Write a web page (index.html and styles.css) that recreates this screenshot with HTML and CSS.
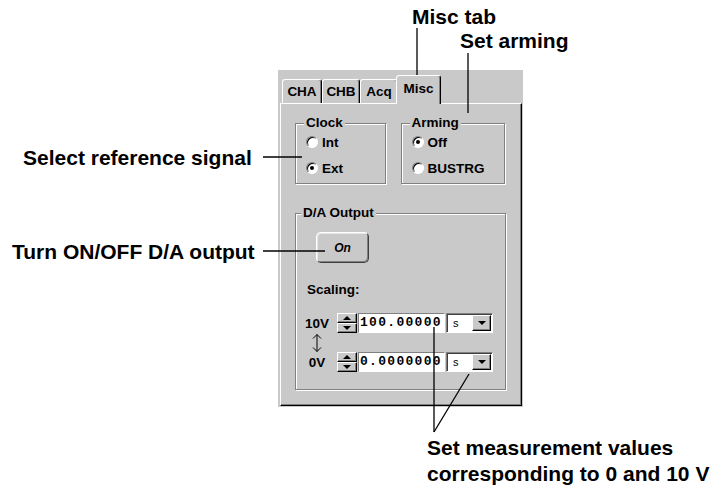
FILE: index.html
```html
<!DOCTYPE html>
<html>
<head>
<meta charset="utf-8">
<title>Misc tab</title>
<link rel="stylesheet" href="styles.css">
</head>
<body>
<div class="sheet">

<!-- the dialog -->
<div class="window">
  <div class="tabs">
    <div class="tab">CHA</div>
    <div class="tab">CHB</div>
    <div class="tab">Acq</div>
    <div class="tab sel">Misc</div>
  </div>
  <div class="pane">
    <div class="toprow">
      <div class="group clock">
        <div class="gtitle">Clock</div>
        <div class="radio"><span class="dot"></span>Int</div>
        <div class="radio"><span class="dot on"></span>Ext</div>
      </div>
      <div class="group arming">
        <div class="gtitle">Arming</div>
        <div class="radio"><span class="dot on"></span>Off</div>
        <div class="radio"><span class="dot"></span>BUSTRG</div>
      </div>
    </div>
    <div class="group da">
      <div class="gtitle">D/A Output</div>
      <div class="onbtn">On</div>
      <div class="scaling">Scaling:</div>
      <div class="srow">
        <span class="vlab">10V</span>
        <span class="spin"><span class="up"></span><span class="down"></span></span>
        <span class="field">100.00000</span>
        <span class="combo"><span class="unit">s</span><span class="drop"></span></span>
      </div>
      <div class="srow mid">
        <svg class="updown" width="14" height="20" viewBox="0 0 14 20">
          <path d="M7 1.5V18.5M3 5.5L7 1.5L11 5.5M3 14.5L7 18.5L11 14.5" fill="none" stroke="#000" stroke-width="1"/>
        </svg>
      </div>
      <div class="srow">
        <span class="vlab">0V</span>
        <span class="spin"><span class="up"></span><span class="down"></span></span>
        <span class="field">0.0000000</span>
        <span class="combo"><span class="unit">s</span><span class="drop"></span></span>
      </div>
    </div>
  </div>
</div>

<!-- callouts -->
<div class="note n-misc">Misc tab</div>
<div class="note n-arm">Set arming</div>
<div class="note n-ref">Select reference signal</div>
<div class="note n-da">Turn ON/OFF D/A output</div>
<div class="note n-meas">Set measurement values<br>corresponding to 0 and 10 V</div>

<svg class="leaders" width="713" height="485" viewBox="0 0 713 485">
  <g stroke="#000" stroke-width="1.3" fill="none">
    <path d="M417 28V81"/>
    <path d="M468 53V113"/>
    <path d="M263 157H302"/>
    <path d="M263 251H325"/>
    <path d="M434 327V432"/>
    <path d="M469 374L434 432"/>
  </g>
</svg>

</div>
</body>
</html>
```

FILE: styles.css
```css
body {
	margin		: 0;
	background-color: white;
	font-family	: "Liberation Sans", Arial, sans-serif;
}
.sheet {
	position	: relative;
	width		: 713px;
	height		: 485px;
	overflow	: hidden;
}

/* callout labels */
.note {
	position	: absolute;
	font-size	: 21px;
	font-weight	: bold;
	line-height	: 24px;
	white-space	: nowrap;
	color		: #000;
}
.n-misc { left: 412px; top: 5px; }
.n-arm  { left: 460px; top: 29px; }
.n-ref  { left: 23px;  top: 146px; }
.n-da   { left: 12px;  top: 240px; }
.n-meas { left: 427px; top: 435px; line-height: 26px; }
.leaders {
	position	: absolute;
	left		: 0;
	top		: 0;
}

/* dialog */
.window {
	position	: absolute;
	left		: 278px;
	top		: 70px;
	width		: 245px;
	height		: 337px;
	box-sizing	: border-box;
	padding		: 5px 1px 1px 2px;
	background	: #c9c9c9;
	display		: flex;
	flex-direction	: column;
	font-size	: 13.5px;
	font-weight	: bold;
	color		: #000;
}
.tabs {
	display		: flex;
	align-items	: flex-end;
	height		: 28px;
	padding-left	: 2px;
}
.tab {
	box-sizing	: border-box;
	width		: 38px;
	height		: 24px;
	padding-top	: 4px;
	text-align	: center;
	border-top	: 1px solid #fff;
	border-left	: 1px solid #fff;
	border-right	: 1px solid #000;
	border-radius	: 3px 3px 0 0;
	box-shadow	: inset -1px 0 #808080;
}
.tab:first-child { width: 40px; }
.tab.sel {
	width		: 45px;
	height		: 29px;
	margin		: 0 -2px -1px -2px;
	padding-top	: 5px;
	background	: #c9c9c9;
	position	: relative;
	z-index		: 1;
}
.pane {
	flex		: 1;
	border-top	: 1px solid #fff;
	border-left	: 1px solid #fff;
	border-right	: 1px solid #000;
	border-bottom	: 1px solid #000;
	box-shadow	: inset -1px -1px #808080;
	padding		: 19px 16px 0 14px;
}

/* group boxes */
.group {
	box-sizing	: border-box;
	border		: 1px solid #808080;
	box-shadow	: inset 1px 1px #fff, 1px 1px #fff;
}
.gtitle {
	width		: fit-content;
	margin		: -8px 0 0 8px;
	padding		: 0 2px;
	line-height	: 14px;
	background	: #c9c9c9;
}
.toprow {
	display		: flex;
	gap		: 15px;
}
.clock  { width: 91px;  height: 61px; }
.arming { width: 105px; height: 61px; }
.radio {
	display		: flex;
	align-items	: center;
	gap		: 4px;
	height		: 26px;
	padding-left	: 10px;
}
.radio:nth-child(2) { margin-top: -1px; }
.dot {
	box-sizing	: border-box;
	width		: 12px;
	height		: 12px;
	border-radius	: 50%;
	background	: #fff;
	border		: 1px solid;
	border-color	: #808080 #fff #fff #808080;
	box-shadow	: inset 1px 1px #000;
	display		: flex;
	align-items	: center;
	justify-content	: center;
}
.dot.on::after {
	content		: "";
	width		: 4px;
	height		: 4px;
	border-radius	: 50%;
	background	: #000;
}

/* D/A output */
.da {
	margin-top	: 29px;
	height		: 177px;
	width		: 211px;
	padding-left	: 9px;
}
.da .gtitle { margin-left: -4px; }
.onbtn {
	box-sizing	: border-box;
	width		: 53px;
	height		: 31px;
	margin		: 12px 0 0 11px;
	border		: 1px solid;
	border-color	: #fff #404040 #404040 #fff;
	border-radius	: 5px;
	box-shadow	: inset -1px -1px #808080, inset 1px 1px #e6e6e6;
	display		: flex;
	align-items	: center;
	justify-content	: center;
	font-style	: italic;
	font-size	: 12px;
}
.scaling {
	margin		: 19px 0 0 2px;
	line-height	: 15px;
}
.srow {
	display		: flex;
	align-items	: center;
	height		: 20px;
}
.scaling + .srow { margin-top: 16px; }
.srow.mid {
	height		: 19px;
	padding-left	: 5px;
}
.vlab {
	width		: 24px;
	text-align	: center;
}
.spin {
	display		: flex;
	flex-direction	: column;
	width		: 20px;
	height		: 20px;
	margin-left	: 8px;
}
.up, .down {
	box-sizing	: border-box;
	flex		: 1;
	border		: 1px solid;
	border-color	: #fff #000 #000 #fff;
	box-shadow	: inset -1px -1px #808080;
	display		: flex;
	align-items	: center;
	justify-content	: center;
}
.up::after, .down::after, .drop::after {
	content		: "";
	border-left	: 4px solid transparent;
	border-right	: 4px solid transparent;
}
.up::after   { border-bottom: 4px solid #000; }
.down::after { border-top: 4px solid #000; }
.field {
	box-sizing	: border-box;
	width		: 87px;
	height		: 20px;
	margin-left	: 1px;
	background	: #fff;
	border		: 1px solid;
	border-color	: #808080 #fff #fff #808080;
	padding-left	: 1px;
	font-family	: "Liberation Mono", "Courier New", monospace;
	font-size	: 13px;
	letter-spacing	: 1.3px;
	line-height	: 18px;
	white-space	: nowrap;
	overflow	: hidden;
}
.combo {
	box-sizing	: border-box;
	width		: 47px;
	height		: 20px;
	margin-left	: 1px;
	background	: #fff;
	border		: 1px solid;
	border-color	: #808080 #fff #fff #808080;
	box-shadow	: inset 1px 1px #404040;
	display		: flex;
	align-items	: center;
	justify-content	: space-between;
	padding		: 0 1px 0 6px;
}
.unit {
	font-weight	: normal;
	font-size	: 11px;
}
.drop {
	box-sizing	: border-box;
	width		: 19px;
	height		: 16px;
	background	: #c9c9c9;
	border		: 1px solid;
	border-color	: #fff #000 #000 #fff;
	box-shadow	: inset -1px -1px #808080;
	display		: flex;
	align-items	: center;
	justify-content	: center;
}
.drop::after { border-top: 4px solid #000; }
```
